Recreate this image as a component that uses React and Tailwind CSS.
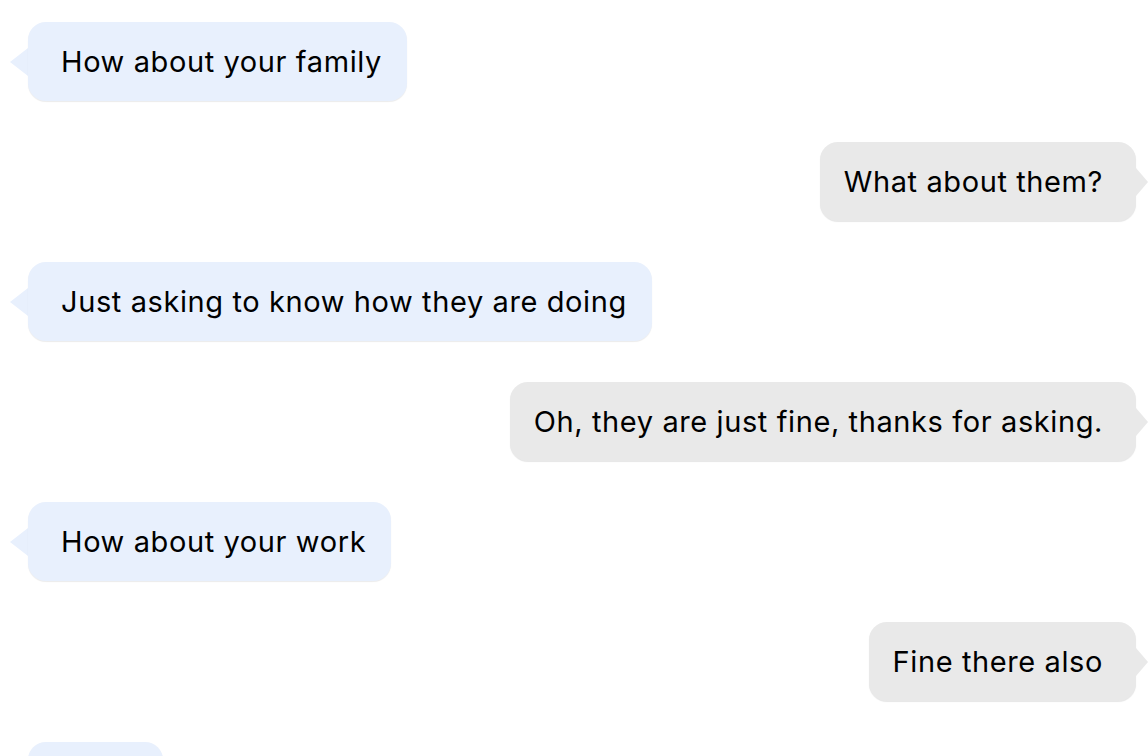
import React from "react";

const messages = [
  { side: "left", text: "How about your family" },
  { side: "right", text: "What about them?" },
  { side: "left", text: "Just asking to know how they are doing" },
  { side: "right", text: "Oh, they are just fine, thanks for asking." },
  { side: "left", text: "How about your work" },
  { side: "right", text: "Fine there also" },
  { side: "left", text: "Good" },
];

const Bubble = ({ side, text }) => {
  if (side === "left") {
    return (
      <div className="flex items-center justify-start pl-[10px]">
        <div className="h-0 w-0 border-y-[14px] border-y-transparent border-r-[18px] border-r-[#e8f0fd]" />
        <div className="flex h-[79px] items-center rounded-[18px] bg-[#e8f0fd] pl-[33px] pr-[25px] shadow-[0_1px_1px_rgba(0,0,0,0.08)]">
          <span className="whitespace-nowrap text-[29px] tracking-[0.6px] text-black">{text}</span>
        </div>
      </div>
    );
  }
  return (
    <div className="flex items-center justify-end">
      <div className="flex h-[79px] items-center rounded-[18px] bg-[#e9e9e9] pl-[24px] pr-[33px] shadow-[0_1px_1px_rgba(0,0,0,0.1)]">
        <span className="whitespace-nowrap text-[29px] tracking-[0.6px] text-black">{text}</span>
      </div>
      <div className="h-0 w-0 border-y-[14px] border-y-transparent border-l-[12px] border-l-[#e9e9e9]" />
    </div>
  );
};

export default function App() {
  return (
    <div
      className="flex h-[756px] w-full flex-col gap-[41px] overflow-hidden bg-white pt-[22px]"
      style={{ fontFamily: "Inter, 'Liberation Sans', sans-serif" }}
    >
      {messages.map((m, i) => (
        <Bubble key={i} side={m.side} text={m.text} />
      ))}
    </div>
  );
}
